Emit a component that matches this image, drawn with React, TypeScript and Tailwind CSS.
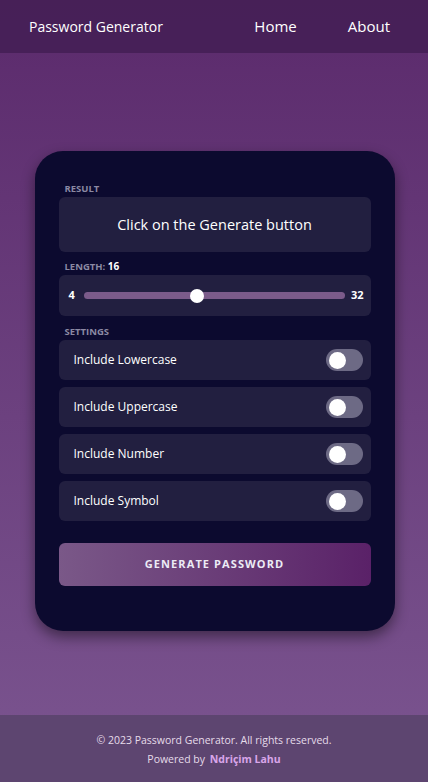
import React, { useState } from "react";

const font = { fontFamily: '"Open Sans", "Noto Sans", sans-serif' };

const settings = ["Include Lowercase", "Include Uppercase", "Include Number", "Include Symbol"];

function Toggle() {
  return (
    <div className="w-[37px] h-[22px] rounded-full bg-[#6d6a85] flex items-center px-[3px]">
      <div className="w-[17px] h-[17px] rounded-full bg-white" />
    </div>
  );
}

export default function App() {
  const [length] = useState(16);

  return (
    <div className="w-[428px] h-[782px] flex flex-col bg-gradient-to-b from-[#5b2a6c] to-[#7b5590] text-white" style={font}>
      <header className="h-[53px] shrink-0 flex items-center justify-between pl-[29px] pr-[38px] bg-[#451f55]/90">
        <span className="text-[14px]">Password Generator</span>
        <nav className="flex gap-[51px] text-[15px]">
          <span>Home</span>
          <span>About</span>
        </nav>
      </header>

      <main className="flex-1 flex justify-center pt-[98px] pl-[1px]">
        <div className="w-[360px] h-[480px] rounded-[28px] bg-[#0c0a2f] px-[24px] pt-[32px] shadow-[0_6px_14px_rgba(0,0,0,0.45)]">
          <div className="pl-[6px] text-[9.5px] font-bold text-[#8b89a3] leading-[12px]">RESULT</div>
          <div className="mt-[2px] h-[55px] rounded-[6px] bg-[#221f40] flex items-center justify-center text-[14.5px]">
            Click on the Generate button
          </div>

          <div className="mt-[8px] pl-[6px] text-[9.5px] font-bold text-[#8b89a3] leading-[12px]">
            LENGTH: <span className="text-white text-[10px] leading-[12px]">{length}</span>
          </div>
          <div className="mt-[2px] h-[41px] rounded-[6px] bg-[#221f40] flex items-center pl-[10px] pr-[7px] text-[11px] font-bold">
            <span>4</span>
            <div className="ml-[9px] mr-[6px] flex-1 h-[7px] rounded-full bg-[#7b5b8a] relative">
              <div className="absolute left-[106px] top-1/2 -translate-y-1/2 w-[14px] h-[14px] rounded-full bg-white" />
            </div>
            <span>32</span>
          </div>

          <div className="mt-[10px] pl-[6px] text-[9.5px] font-bold text-[#8b89a3] leading-[12px]">SETTINGS</div>
          <div className="mt-[2px] flex flex-col gap-[7px]">
            {settings.map((s) => (
              <div key={s} className="h-[40px] rounded-[6px] bg-[#221f40] flex items-center justify-between pl-[15px] pr-[8px] text-[12px]">
                <span>{s}</span>
                <Toggle />
              </div>
            ))}
          </div>

          <button className="mt-[22px] w-full h-[43px] rounded-[6px] bg-gradient-to-r from-[#7a5888] to-[#5a2168] text-[11px] font-bold tracking-[1.1px] text-[#ecebf5]">
            GENERATE PASSWORD
          </button>
        </div>
      </main>

      <footer className="h-[67px] shrink-0 bg-[#5d4570] flex flex-col items-center justify-center gap-[3px] text-[10.5px] text-[#e6dcea] pt-[4px]">
        <span>© 2023 Password Generator. All rights reserved.</span>
        <span>
          Powered by <span className="ml-[2px] font-bold text-[#d9a6ea]">Ndriçim Lahu</span>
        </span>
      </footer>
    </div>
  );
}
